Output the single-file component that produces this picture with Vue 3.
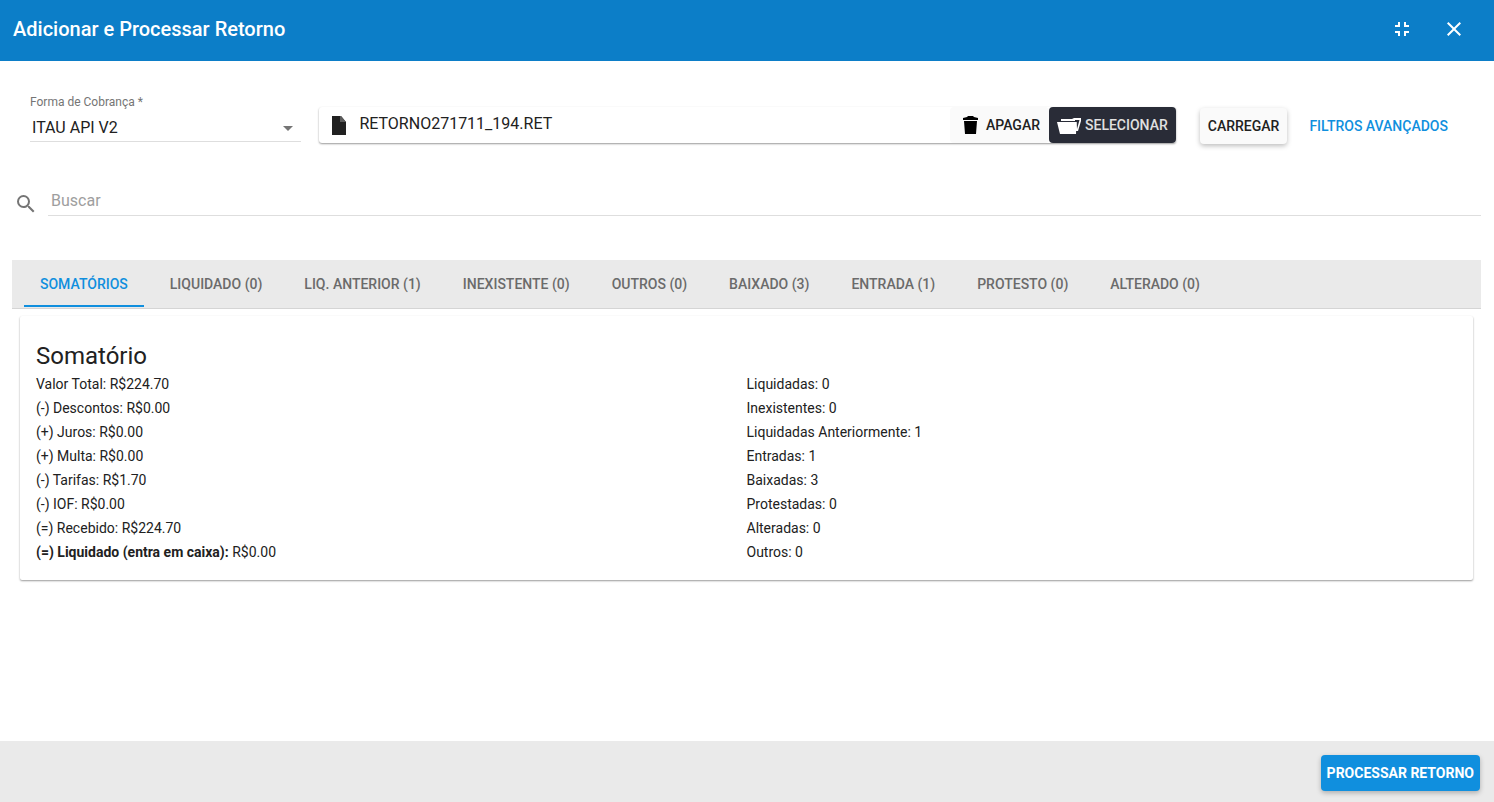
<script setup>
import { ref } from 'vue'

const billing = ref('ITAU API V2')
const search = ref('')
const activeTab = ref(0)

const tabs = [
  'Somatórios',
  'Liquidado (0)',
  'Liq. Anterior (1)',
  'Inexistente (0)',
  'Outros (0)',
  'Baixado (3)',
  'Entrada (1)',
  'Protesto (0)',
  'Alterado (0)',
]

const totals = [
  { label: 'Valor Total:', value: 'R$224.70' },
  { label: '(-) Descontos:', value: 'R$0.00' },
  { label: '(+) Juros:', value: 'R$0.00' },
  { label: '(+) Multa:', value: 'R$0.00' },
  { label: '(-) Tarifas:', value: 'R$1.70' },
  { label: '(-) IOF:', value: 'R$0.00' },
  { label: '(=) Recebido:', value: 'R$224.70' },
  { label: '(=) Liquidado (entra em caixa):', value: 'R$0.00', strong: true },
]

const counts = [
  { label: 'Liquidadas:', value: 0 },
  { label: 'Inexistentes:', value: 0 },
  { label: 'Liquidadas Anteriormente:', value: 1 },
  { label: 'Entradas:', value: 1 },
  { label: 'Baixadas:', value: 3 },
  { label: 'Protestadas:', value: 0 },
  { label: 'Alteradas:', value: 0 },
  { label: 'Outros:', value: 0 },
]
</script>

<template>
  <div class="dialog">
    <header class="toolbar">
      <h1 class="title">Adicionar e Processar Retorno</h1>
      <div class="tools">
        <button class="tool" type="button" aria-label="Sair da tela cheia">
          <svg viewBox="0 0 24 24" width="24" height="24" fill="currentColor" aria-hidden="true">
            <path d="M5 16h3v3h2v-5H5v2zm3-8H5v2h5V5H8v3zm6 11h2v-3h3v-2h-5v5zm2-11V5h-2v5h5V8h-3z" />
          </svg>
        </button>
        <button class="tool" type="button" aria-label="Fechar">
          <svg viewBox="0 0 24 24" width="24" height="24" fill="currentColor" aria-hidden="true">
            <path d="M19 6.41L17.59 5 12 10.59 6.41 5 5 6.41 10.59 12 5 17.59 6.41 19 12 13.41 17.59 19 19 17.59 13.41 12z" />
          </svg>
        </button>
      </div>
    </header>

    <main class="content">
      <form class="filters" @submit.prevent>
        <div class="field">
          <label class="field-label" for="billing">Forma de Cobrança *</label>
          <div class="select-box">
            <select id="billing" v-model="billing" class="select">
              <option>ITAU API V2</option>
            </select>
            <svg class="caret" viewBox="0 0 10 5" width="10" height="5" aria-hidden="true">
              <path d="M0 0h10L5 5z" fill="currentColor" />
            </svg>
          </div>
        </div>

        <div class="file">
          <svg class="file-icon" viewBox="0 0 14 19" width="14" height="19" aria-hidden="true">
            <path d="M0 0h9l5 6v13H0z" fill="#212121" />
            <path d="M8 0h1l5 6H8z" fill="#5c5c5c" />
          </svg>
          <span class="file-name">RETORNO271711_194.RET</span>
          <button class="btn erase" type="button">
            <svg viewBox="0 0 15 18" width="15" height="18" aria-hidden="true">
              <path d="M0 2l4-1 1-1h5l1 1 4 1v2H0zM1 5h13l-1 13H2z" fill="#000" />
            </svg>
            Apagar
          </button>
          <button class="btn choose" type="button">
            <svg viewBox="0 0 24 17" width="24" height="17" aria-hidden="true">
              <path d="M4 2h11l2-1h7v3l-3 10h-3V4H4z" fill="#fff" />
              <path d="M18 3h4.500L20 12l-.5-7H18z" fill="#292c37" />
              <path d="M0 5h19.500L19 17H3z" fill="#fff" />
              <path d="M3 4.500h16" stroke="#292c37" stroke-width=".6" />
            </svg>
            Selecionar
          </button>
        </div>

        <button class="btn load" type="button">Carregar</button>
        <button class="btn advanced" type="button">Filtros Avançados</button>
      </form>

      <div class="search">
        <label class="search-icon" for="search" aria-label="Buscar">
          <svg viewBox="0 0 24 24" width="24" height="24" fill="currentColor" aria-hidden="true">
            <path d="M15.500 14h-.79l-.28-.27A6.470 6.470 0 0 0 16 9.500 6.500 6.500 0 1 0 9.500 16c1.610 0 3.090-.59 4.230-1.570l.27.28v.79l5 4.990L20.490 19l-4.990-5zm-6 0C7.010 14 5 11.990 5 9.500S7.010 5 9.500 5 14 7.010 14 9.500 11.990 14 9.500 14z" />
          </svg>
        </label>
        <input id="search" v-model="search" class="search-input" type="text" placeholder="Buscar" />
      </div>

      <div class="tabs" role="tablist">
        <button
          v-for="(tab, i) in tabs"
          :key="tab"
          type="button"
          role="tab"
          class="tab"
          :class="{ active: i === activeTab }"
          :aria-selected="i === activeTab"
          @click="activeTab = i"
        >
          {{ tab }}
        </button>
      </div>

      <section class="card">
        <h2 class="card-title">Somatório</h2>
        <div class="columns">
          <ul class="list">
            <li v-for="row in totals" :key="row.label">
              <strong v-if="row.strong">{{ row.label }}</strong>
              <template v-else>{{ row.label }}</template>
              {{ row.value }}
            </li>
          </ul>
          <ul class="list">
            <li v-for="row in counts" :key="row.label">{{ row.label }} {{ row.value }}</li>
          </ul>
        </div>
      </section>
    </main>

    <footer class="footer">
      <button class="btn process" type="button">Processar Retorno</button>
    </footer>
  </div>
</template>

<style>
body {
  margin: 0;
}
</style>

<style scoped>
.dialog {
  display: flex;
  flex-direction: column;
  min-height: 100vh;
  background: #fff;
  color: #212121;
  font-family: Roboto, "Liberation Sans", sans-serif;
  font-size: 14px;
}

.dialog *,
.dialog {
  box-sizing: border-box;
}

button,
input,
select {
  margin: 0;
  border: 0;
  font-family: inherit;
  color: inherit;
}

button {
  cursor: pointer;
}

.toolbar {
  display: flex;
  align-items: center;
  justify-content: space-between;
  padding: 8px 20px 12px 13px;
  min-height: 61px;
  background: #0c7ec8;
  color: #fff;
}

.title {
  margin: 0;
  font-size: 20px;
  font-weight: 500;
  line-height: 24px;
}

.tools {
  display: flex;
  gap: 12px;
}

.tool {
  display: flex;
  padding: 8px;
  background: none;
}

.content {
  flex: 1;
  padding: 34px 13px 24px 12px;
}

.filters {
  display: flex;
  align-items: flex-start;
  padding: 0 25px 0 18px;
}

.field {
  flex: 271 1 0;
  margin-right: 18px;
}

.field-label {
  display: block;
  font-size: 12px;
  line-height: 14px;
  color: #757575;
}

.select-box {
  display: grid;
  align-items: center;
  margin-top: 6px;
  border-bottom: 1px solid #dedede;
}

.select {
  grid-area: 1 / 1;
  width: 100%;
  height: 26px;
  padding: 0 24px 2px 2px;
  background: none;
  appearance: none;
  font-size: 16px;
}

.caret {
  grid-area: 1 / 1;
  justify-self: end;
  margin-right: 8px;
  color: #757575;
  pointer-events: none;
}

.file {
  flex: 855 1 0;
  display: flex;
  align-items: center;
  height: 36px;
  margin: 12px 24px 0 0;
  border-radius: 3px;
  box-shadow: 0 1px 2px rgba(0, 0, 0, 0.4);
}

.file-icon {
  margin: 0 13px;
}

.file-name {
  flex: 1;
  font-size: 16px;
  line-height: 20px;
  padding-bottom: 2px;
}

.btn {
  display: flex;
  align-items: center;
  justify-content: center;
  height: 36px;
  padding: 0 8px;
  border-radius: 4px;
  background: none;
  font-size: 14px;
  font-weight: 500;
  text-transform: uppercase;
  white-space: nowrap;
}

.erase {
  gap: 8px;
  padding: 0 9px 0 13px;
  background: #fafafa;
}

.choose {
  gap: 4px;
  background: #292c37;
  color: #e0e0e0;
}

.load {
  margin: 13px 14px 0 0;
  background: #fafafa;
  box-shadow: 0 2px 5px rgba(0, 0, 0, 0.26);
}

.advanced {
  margin-top: 13px;
  color: #108fde;
}

.search {
  display: flex;
  align-items: flex-end;
  margin-top: 40px;
}

.search-icon {
  display: flex;
  margin-right: 10px;
  padding-left: 2px;
  color: #757575;
}

.search-input {
  flex: 1;
  min-width: 0;
  height: 32px;
  padding: 2px 3px 0;
  border-bottom: 1px solid #dedede;
  background: none;
  font-size: 16px;
}

.search-input::placeholder {
  color: #9e9e9e;
  opacity: 1;
}

.tabs {
  display: flex;
  gap: 10px;
  margin-top: 44px;
  padding: 0 12px;
  background: #eaeaea;
  border-bottom: 1px solid #d5d5d5;
}

.tab {
  height: 47px;
  margin-bottom: 1px;
  padding: 2px 16px 0;
  border-bottom: 2px solid transparent;
  background: none;
  color: #6b6b6b;
  font-size: 14px;
  font-weight: 500;
  text-transform: uppercase;
  white-space: nowrap;
}

.tab.active {
  color: #108fde;
  border-bottom-color: #108fde;
}

.card {
  margin: 7px 8px 0;
  padding: 24px 16px 16px;
  border-radius: 2px;
  box-shadow: 0 1px 2px rgba(0, 0, 0, 0.4);
}

.card-title {
  margin: 0;
  font-size: 24px;
  font-weight: 400;
  line-height: 32px;
}

.columns {
  display: grid;
  grid-template-columns: 1fr 1fr;
}

.list {
  margin: 0;
  padding: 0;
  list-style: none;
  line-height: 24px;
}

.footer {
  display: flex;
  align-items: center;
  justify-content: flex-end;
  min-height: 61px;
  padding: 14px 14px 11px;
  background: #eaeaea;
}

.process {
  padding: 0 6px;
  background: #108fde;
  color: #fff;
  font-weight: 700;
  box-shadow: 0 2px 5px rgba(0, 0, 0, 0.26);
}
</style>
